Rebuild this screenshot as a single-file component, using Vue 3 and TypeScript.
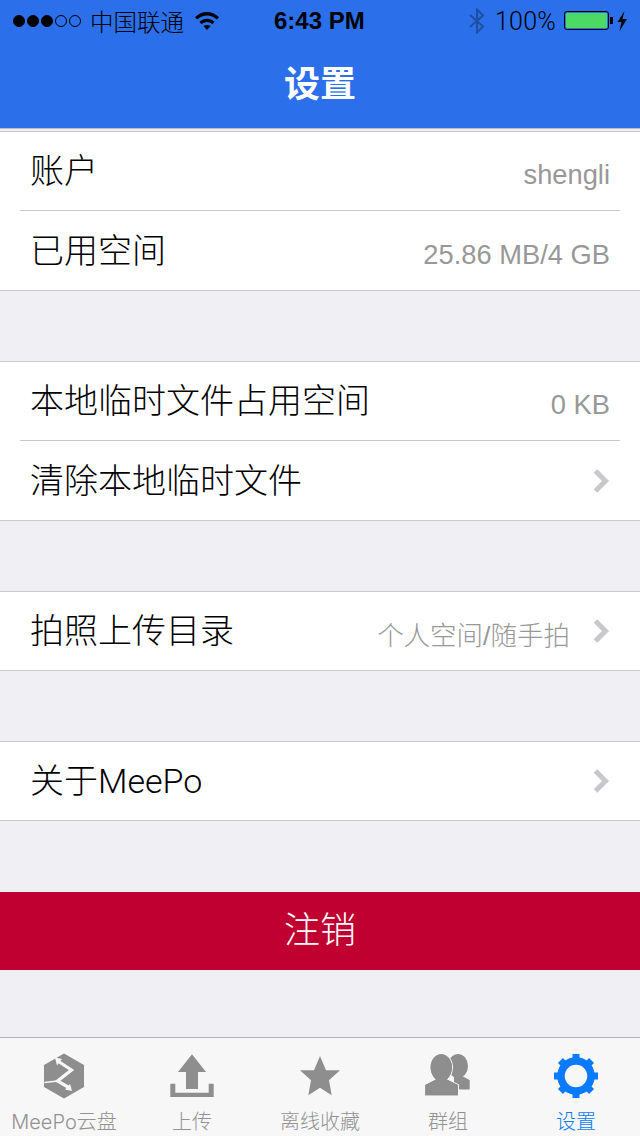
<script setup lang="ts">
interface Row {
  label: string;
  value?: string;
  arrow?: boolean;
}

const groups: Row[][] = [
  [
    { label: '账户', value: 'shengli' },
    { label: '已用空间', value: '25.86 MB/4 GB' },
  ],
  [
    { label: '本地临时文件占用空间', value: '0 KB' },
    { label: '清除本地临时文件', arrow: true },
  ],
  [{ label: '拍照上传目录', value: '个人空间/随手拍', arrow: true }],
  [{ label: '关于MeePo', arrow: true }],
];

const tabs = [
  { key: 'cloud', label: 'MeePo云盘' },
  { key: 'upload', label: '上传' },
  { key: 'star', label: '离线收藏' },
  { key: 'group', label: '群组' },
  { key: 'gear', label: '设置' },
];

const isCjk = (text: string) => /[^\x00-\x7f]/.test(text);
</script>

<template>
  <div class="screen">
    <header class="header">
      <div class="status">
        <div class="status-left">
          <span class="dots">
            <i v-for="n in 3" :key="n" class="dot on"></i>
            <i v-for="n in 2" :key="n" class="dot"></i>
          </span>
          <span class="carrier">中国联通</span>
          <svg class="wifi" width="24" height="19" viewBox="0 0 24 19">
            <path d="M0 6.2C7 -.8 17 -.8 24 6.2L21.8 8.6C16 3 8 3 2.2 8.6Z" fill="#000" />
            <path d="M4.4 10.8C9 6.6 15 6.6 19.6 10.8L17.4 13.2C14 10.3 10 10.3 6.6 13.2Z" fill="#000" />
            <path d="M8.4 15C10.5 13.6 13.5 13.6 15.6 15L12 19Z" fill="#000" />
          </svg>
        </div>
        <span class="time">6:43 PM</span>
        <div class="status-right">
          <svg class="bt" width="18" height="26" viewBox="0 0 18 26">
            <path d="M2 7L15 18.5L9 24.5V1.5L15 7.5L2 19" fill="none" stroke="#1e4fa0" stroke-width="2" />
          </svg>
          <span class="percent">100%</span>
          <span class="battery"><span class="battery-fill"></span></span>
          <span class="battery-tip"></span>
          <svg class="bolt" width="12" height="20" viewBox="0 0 12 20">
            <path d="M8.5 0L1.5 11H5.5L3.5 20L11 8H6.5Z" fill="#000" />
          </svg>
        </div>
      </div>
      <h1 class="title">设置</h1>
    </header>

    <main class="content">
      <section v-for="(group, i) in groups" :key="i" class="group">
        <div v-for="row in group" :key="row.label" class="row">
          <div class="row-inner">
            <span class="label">{{ row.label }}</span>
            <span v-if="row.value" class="value" :class="{ cjk: isCjk(row.value) }">{{ row.value }}</span>
            <svg v-if="row.arrow" class="arrow" width="18" height="28" viewBox="0 0 18 28">
              <path d="M3.5 4L13.5 14L3.5 24" fill="none" stroke="#c7c7cc" stroke-width="5" />
            </svg>
          </div>
        </div>
      </section>
      <div class="logout">注销</div>
    </main>

    <nav class="tabbar">
      <div v-for="tab in tabs" :key="tab.key" class="tab" :class="{ active: tab.key === 'gear' }">
        <svg class="tab-icon" width="60" height="60" viewBox="0 0 60 60">
          <template v-if="tab.key === 'cloud'">
            <path d="M30 7.5L50 19V41L30 52.5L10 41V19Z" fill="#8e8e8e" />
            <path d="M23 14.5L37.5 24L23.5 35L36.5 42.5" fill="none" stroke="#f7f7f8" stroke-width="3.2" />
            <path d="M10.5 36.5L23.5 35" fill="none" stroke="#f7f7f8" stroke-width="1.5" />
            <path d="M21 11.5L28 13L23 19.5Z" fill="#f7f7f8" />
            <path d="M38 45L31 43.5L36 38Z" fill="#f7f7f8" />
          </template>
          <template v-else-if="tab.key === 'upload'">
            <path d="M30 8.3L44 26H36V43H24V26H16Z" fill="#8e8e8e" />
            <path d="M8.3 37.7V51H51.7V37.7H46.7V46.7H13.3V37.7Z" fill="#8e8e8e" />
          </template>
          <template v-else-if="tab.key === 'star'">
            <path d="M30 10L36 24.3L50 24.3L39 34.3L41.7 49.3L30 41.7L18.3 49.3L21 34.3L10 24.3L24 24.3Z" fill="#8e8e8e" />
          </template>
          <template v-else-if="tab.key === 'group'">
            <ellipse cx="40" cy="20" rx="10" ry="12" fill="#8e8e8e" />
            <path d="M36 30H44L51.7 34V43.5H36Z" fill="#8e8e8e" />
            <path d="M7.3 49.3V39L18 33.5C14.5 30.5 12.6 26 12.6 21.5C12.6 14 17.4 8.2 23.3 8.2C29.2 8.2 34 14 34 21.5C34 26 32 30.5 28.8 33.5L40 39V49.3Z" fill="#8e8e8e" stroke="#f7f7f8" stroke-width="2" paint-order="stroke" />
            <path d="M7.3 49.3V39L18 33.5C14.5 30.5 12.6 26 12.6 21.5C12.6 14 17.4 8.2 23.3 8.2C29.2 8.2 34 14 34 21.5C34 26 32 30.5 28.8 33.5L40 39V49.3Z" fill="#8e8e8e" />
          </template>
          <template v-else>
            <circle cx="30" cy="30" r="15" fill="none" stroke="#0a7aff" stroke-width="7.5" />
            <g fill="#0a7aff">
              <rect v-for="a in [0, 45, 90, 135, 180, 225, 270, 315]" :key="a" x="26.5" y="8" width="7" height="6" :transform="`rotate(${a} 30 30)`" />
            </g>
          </template>
        </svg>
        <span class="tab-label">{{ tab.label }}</span>
      </div>
    </nav>
  </div>
</template>

<style>
html,
body {
  margin: 0;
  background: #efeff4;
}
</style>

<style scoped>
.screen {
  width: 640px;
  height: 1136px;
  display: flex;
  flex-direction: column;
  overflow: hidden;
  background: #efeff4;
  font-family: 'Liberation Sans', 'Noto Sans CJK SC', sans-serif;
}

.header {
  height: 128px;
  flex-shrink: 0;
  background: #2b70ea;
  box-shadow: 0 1px 0 #bdbdbd;
}

.status {
  height: 40px;
  padding: 1px 12px 0 13px;
  box-sizing: border-box;
  display: flex;
  align-items: center;
  justify-content: space-between;
  color: #000;
  position: relative;
}

.status-left,
.status-right {
  display: flex;
  align-items: center;
}

.dots {
  display: flex;
  gap: 2px;
}

.dot {
  width: 12px;
  height: 12px;
  box-sizing: border-box;
  border: 1px solid #000;
  border-radius: 50%;
}

.dot.on {
  background: #000;
}

.carrier {
  margin-left: 9px;
  font-size: 23.5px;
  font-weight: 300;
}

.wifi {
  margin-left: 11px;
}

.time {
  position: absolute;
  left: 274px;
  font-size: 24px;
  font-weight: 700;
}

.bt {
  margin-right: 9px;
}

.percent {
  width: 61px;
  padding-top: 1px;
  font-family: 'Roboto', 'Liberation Sans', sans-serif;
  font-size: 25px;
  font-weight: 300;
  letter-spacing: 0.2px;
  white-space: nowrap;
}

.battery {
  margin-left: 8px;
  width: 45px;
  height: 19px;
  box-sizing: border-box;
  border: 1px solid #000;
  border-radius: 3px;
  padding: 1px;
  display: flex;
}

.battery-fill {
  flex: 1;
  background: #4cd964;
  border-radius: 1px;
}

.battery-tip {
  width: 3px;
  height: 7px;
  background: #000;
  margin-left: 1px;
}

.bolt {
  margin-left: 3px;
}

.title {
  margin: 0;
  height: 88px;
  line-height: 90px;
  text-align: center;
  color: #fff;
  font-size: 36px;
  font-weight: 700;
}

.content {
  flex: 1;
  padding-top: 3px;
}

.group {
  background: #fff;
  border-top: 1px solid #c8c7cc;
  border-bottom: 1px solid #c8c7cc;
  margin-bottom: 70px;
}

.row {
  padding: 0 20px;
}

.row + .row .row-inner {
  border-top: 1px solid #c8c7cc;
  height: 80px;
}

.row-inner {
  height: 78px;
  box-sizing: border-box;
  padding: 0 10px;
  display: flex;
  align-items: center;
}

.label {
  flex: 1;
  color: #000;
  font-family: 'Roboto', 'Noto Sans CJK SC', sans-serif;
  font-size: 34px;
  font-weight: 300;
  padding-bottom: 5px;
}

.value {
  color: #989898;
  font-size: 27.3px;
  padding-top: 8px;
}

.value.cjk {
  font-size: 26.5px;
  font-weight: 300;
  padding-top: 5px;
}

.arrow {
  margin-left: 22px;
}

.logout {
  height: 78px;
  margin-top: 71px;
  background: #bf0030;
  color: #fff;
  text-align: center;
  line-height: 78px;
  font-size: 36px;
  font-weight: 300;
}

.tabbar {
  height: 99px;
  box-sizing: border-box;
  flex-shrink: 0;
  border-top: 1px solid #b2b2b2;
  background: #f7f7f8;
  display: flex;
}

.tab {
  width: 128px;
  display: flex;
  flex-direction: column;
  align-items: center;
  color: #929292;
}

.tab.active {
  color: #0a7aff;
}

.tab-icon {
  margin-top: 8px;
  flex-shrink: 0;
}

.tab-label {
  font-family: 'Inter', 'Noto Sans CJK SC', sans-serif;
  font-size: 20px;
  font-weight: 300;
  line-height: 24px;
  margin-top: 4px;
  white-space: nowrap;
}
</style>
